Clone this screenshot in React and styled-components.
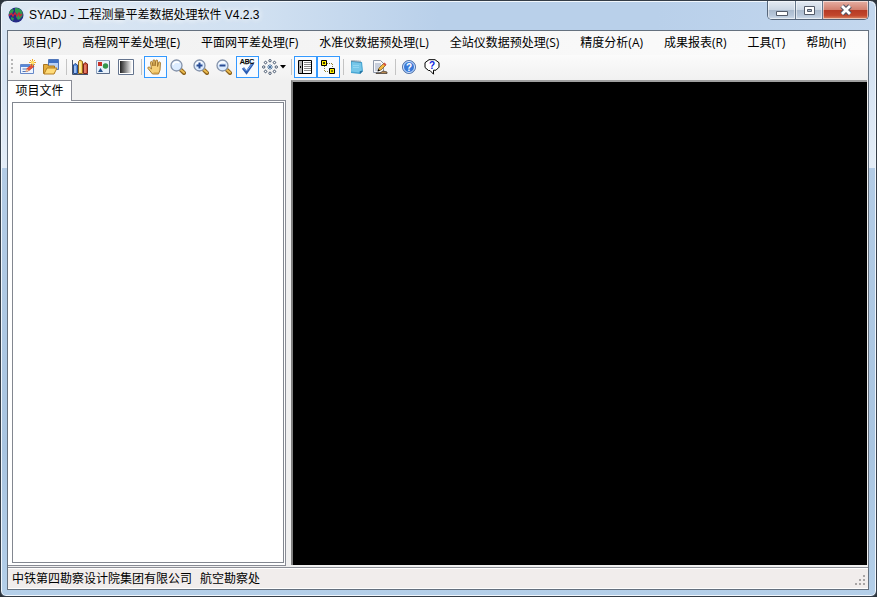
import React from "react";
import styled, { createGlobalStyle, css } from "styled-components";

const Page = createGlobalStyle`
  * { box-sizing: border-box; }
  html, body, #root { height: 100%; }
  body {
    margin: 0;
    overflow: hidden;
    background: #2c333b;
    color: #000;
    font: 12px/16px "Open Sans", "Noto Sans CJK SC", sans-serif;
  }
  button { font: inherit; color: inherit; padding: 0; margin: 0; }
`;

const Window = styled.div`
  height: 100%;
  display: flex;
  flex-direction: column;
  padding: 0 7px 6px 6px;
  border: 1px solid #343d48;
  border-radius: 7px 7px 6px 6px;
  background:
    linear-gradient(90deg, #dde8f4, #d0e0f1 30%, #b9d0ea 50%, #b9d0ea 75%, #c3d7ee) top / 100% 29px no-repeat,
    linear-gradient(180deg, #d5e3f3 0 70px, #e4edf7 167px, #b3cce6 167px, #a9c5e1 450px, #b4cfe9 100%);
  box-shadow: inset 0 0 0 1px #f1f7fd;
`;

const TitleBar = styled.header`
  flex: 0 0 29px;
  display: flex;
  align-items: flex-start;
  padding-left: 1px;
`;

const AppMark = styled.svg`
  flex: none;
  margin: 6px 5px 0 0;
`;

const Title = styled.h1`
  flex: 1;
  margin: 6px 0 0;
  font: 400 12px/16px "Liberation Sans", "Noto Sans CJK SC", sans-serif;
  white-space: nowrap;
  text-shadow: 0 0 6px #fff, 0 0 6px #fff;
`;

const Caption = styled.div`
  display: flex;
  height: 19px;
  border: 1px solid #56667a;
  border-top: 0;
  border-radius: 0 0 5px 5px;
  overflow: hidden;
`;

const CaptionButton = styled.button`
  width: ${(p) => (p.$close ? 46 : 27)}px;
  border: 0;
  border-left: ${(p) => (p.$first ? "0" : "1px solid #66778b")};
  display: flex;
  align-items: center;
  justify-content: center;
  box-shadow: inset 0 0 0 1px #ffffff88;
  background: ${(p) =>
    p.$close
      ? "linear-gradient(#e6b0a4, #d2806f 48%, #b53a24 50%, #c2462c 80%, #dc8a66)"
      : "linear-gradient(#e4ebf3, #ccd7e4 48%, #a9b9cc 50%, #b7c7da 80%, #cfdcea)"};
`;

const Client = styled.main`
  flex: 1;
  min-height: 0;
  display: flex;
  flex-direction: column;
  border: 1px solid #65717f;
  background: #f0f0f0;
`;

const Menu = styled.nav`
  flex: 0 0 24px;
  display: flex;
  align-items: center;
  gap: 21px;
  padding: 0 0 1px 15px;
  background: linear-gradient(90deg, #f0f0f0, #fcfcfc);
`;

const MenuItem = styled.button`
  border: 0;
  background: none;
  white-space: nowrap;
`;

const ToolBar = styled.div`
  flex: 0 0 25px;
  display: flex;
  align-items: center;
  padding-bottom: 1px;
  background: linear-gradient(#fbfbfb, #f1f1f1);
`;

const Grip = styled.span`
  width: 2px;
  height: 16px;
  margin: 0 4px 0 3px;
  background: repeating-linear-gradient(#b8b8b8 0 2px, transparent 2px 4px);
`;

const Divider = styled.span`
  width: 1px;
  height: 16px;
  margin: 0 2px 0 3px;
  background: #c4c4c4;
`;

const Tool = styled.button`
  flex: none;
  display: flex;
  align-items: center;
  justify-content: flex-start;
  gap: 1px;
  width: ${(p) => (p.$wide ? 29 : 23)}px;
  height: 22px;
  padding-left: 2px;
  border: 1px solid transparent;
  background: none;
  ${(p) => p.$on && css`border-color: #3399ff; background: #f8fbff;`}
`;

const Work = styled.div`
  flex: 1;
  min-height: 0;
  display: flex;
  padding-bottom: 1px;
`;

const Side = styled.section`
  flex: 0 0 278px;
  display: flex;
  flex-direction: column;
`;

const Tabs = styled.div`
  display: flex;
  height: 21px;
`;

const Tab = styled.button`
  width: 64px;
  border: 1px solid #898c95;
  border-width: 1px 1px 0 0;
  background: #fff;
  text-align: center;
`;

const TabFill = styled.span`
  flex: 1;
  border-bottom: 1px solid #898c95;
`;

const TabPage = styled.div`
  flex: 1;
  display: flex;
  padding: 1px 1px 2px 4px;
  background: #fff;
  border: 1px solid #898c95;
  border-width: 0 1px 1px 0;
`;

const Tree = styled.div`
  flex: 1;
  border: 1px solid #828790;
`;

const Canvas = styled.section`
  flex: 1;
  margin: 0 1px 1px 5px;
  border: solid #696969;
  border-width: 2px 0 0 2px;
  border-color: #a0a0a0 #696969 #696969 #808080;
  background: #000;
`;

const Status = styled.footer`
  flex: 0 0 22px;
  display: flex;
  align-items: center;
  gap: 8px;
  padding: 0 1px 0 4px;
  border-top: 1px solid #8b8e96;
  box-shadow: inset 0 1px 0 #fff, inset 0 -1px 0 #fff;
  background: #f1edec;
`;

const Sizer = styled.svg`
  margin: 0 0 2px auto;
  align-self: flex-end;
`;

const Icon = ({ children, w = 16 }) => (
  <svg width={w} height="16" viewBox={`0 0 ${w} 16`} aria-hidden="true">{children}</svg>
);

const NewIcon = () => (
  <Icon>
    <path d="M.5 5.500h13v9H.5z" fill="#eef5ff" stroke="#6688c8" />
    <path d="M1 6h9v2H1z" fill="#5888d8" />
    <path d="M2.500 10h5M2.500 12.500h5" stroke="#5276b8" />
    <path d="m6 12.500 1-3 5-4 2 2-5 4z" fill="#e8533a" stroke="#b8321f" strokeWidth=".6" />
    <path d="m5.500 13 1.300-3.200 2 2z" fill="#f6d2a0" />
    <path d="M12.500 0v7M9 3.500h7M10 1l5 5M15 1l-5 5" stroke="#f2a51f" strokeWidth="1" />
    <circle cx="12.500" cy="3.500" r="1.800" fill="#ffe36a" />
  </Icon>
);

const OpenIcon = () => (
  <Icon>
    <path d="M5.500.5h10v10h-10z" fill="#b9d1f5" stroke="#5278ba" />
    <path d="M6 1h9v3H6z" fill="#3f70c5" />
    <path d="M.5 14.500v-9h4l1 1.500h6v7z" fill="#e6ae3b" stroke="#a97520" />
    <path d="m1 15 3-6h10l-3 6z" fill="#ffdb78" stroke="#b57f22" />
  </Icon>
);

const BooksIcon = () => (
  <Icon>
    <path d="M.5 1v14.500H16" fill="none" stroke="#45536b" />
    <path d="m1.500 6 1.500-1.500L5.500 6v8.500h-4z" fill="#5a92e4" stroke="#264b8c" />
    <path d="M6.500 2.500 8 1l2.500 1.500v12h-4z" fill="#f7d35a" stroke="#946519" />
    <path d="m11.500 5 1.500-1.500L15.500 5v9.500h-4z" fill="#d4573c" stroke="#7d241c" />
    <path d="M3 7v7M8 3.500v10" stroke="#fff" strokeOpacity=".8" />
    <path d="M13 6v8" stroke="#f2a08c" />
  </Icon>
);

const ShapesIcon = () => (
  <Icon>
    <path d="M1.500 1.500h13v13h-13z" fill="#e9f2fb" stroke="#91a3bd" />
    <path d="M3 3h4v4H3z" fill="#c83027" />
    <circle cx="10.500" cy="7" r="2.700" fill="#33964c" />
    <path d="m3 13 2.500-4L8 13z" fill="#26518e" />
    <path d="M2 14.500h12.500V2" fill="none" stroke="#5a6c88" />
  </Icon>
);

const GradientIcon = () => (
  <Icon>
    <defs>
      <linearGradient id="shade"><stop stopColor="#222" /><stop offset="1" stopColor="#fff" /></linearGradient>
    </defs>
    <path d="M.5.5h15v15H.5z" fill="#fff" stroke="#64748e" />
    <path d="M2 2h12v12H2z" fill="url(#shade)" />
  </Icon>
);

const HandIcon = () => (
  <Icon>
    <path d="M5.500 15 1 9.500c-.6-1.200.8-2 1.700-1.200L4.500 10 3.500 3.500c0-1.200 1.400-1.300 1.700-.2L6 7V1.800c0-1.300 1.900-1.300 2 0V7l.8-5.200c.2-1.200 1.900-1 1.900.2L10.600 7.500l1-4c.4-1 1.900-.6 1.800.5L13 11l-1.500 4z" fill="#f5cf78" stroke="#9a6c22" strokeWidth=".9" />
    <path d="M6.500 14h5" stroke="#d09a3b" />
  </Icon>
);

const LensIcon = ({ sign }) => (
  <Icon>
    <path d="m11 11 3 3" stroke="#8b611c" strokeWidth="4" strokeLinecap="round" />
    <path d="m11 11 3 2.500" stroke="#edbd50" strokeWidth="2" strokeLinecap="round" />
    <circle cx="6.500" cy="6.500" r="5.500" fill="#dcecff" stroke="#8593aa" strokeWidth="1.300" />
    <path d="M3 6a3.700 3.700 0 0 1 6-2" stroke="#fff" strokeWidth="1.500" fill="none" />
    {sign && <path d="M3.500 6.500h6" stroke="#294c94" strokeWidth="2" />}
    {sign === "plus" && <path d="M6.500 3.500v6" stroke="#294c94" strokeWidth="2" />}
  </Icon>
);

const Letters = styled.text`
  font: 7px "Liberation Sans", sans-serif;
`;

const SpellIcon = () => (
  <Icon w={18}>
    <path d="m4 9 3.500 4.500L14 4" fill="none" stroke="#2b5db4" strokeWidth="2.800" />
    <path d="m4.500 9 3 3L13.500 4.500" fill="none" stroke="#7ba6ea" />
    <Letters x="1" y="5" stroke="#000" strokeWidth=".3">ABC</Letters>
  </Icon>
);

const spokes = [0, 45, 90, 135, 180, 225, 270, 315];

const PointsIcon = () => (
  <Icon>
    {spokes.map((angle) => (
      <g key={angle} transform={`rotate(${angle} 8 8)`}>
        <circle cx="8" cy="1.700" r="1.200" fill="#fff" stroke="#36465f" strokeWidth=".9" />
        <path d="M8 5v3" stroke="#3e6b9d" strokeWidth=".8" />
      </g>
    ))}
  </Icon>
);

const Arrow = () => (
  <svg width="7" height="4" viewBox="0 0 7 4" aria-hidden="true"><path d="M1 0h6L4 3.500z" /></svg>
);

const ListIcon = () => (
  <Icon>
    <path d="M1.500 1.500h13v13h-13z" fill="#fff" stroke="#000" />
    <path d="M2 2h3v12H2z" fill="#b4b4b4" />
    <path d="M5.500 2v12" stroke="#000" />
    <path d="M7 3.500h7M7 5.500h7M7 7.500h7M7 9.500h7M7 11.500h7" stroke="#888" />
    <path d="M3 7h1v2H3z" />
  </Icon>
);

const NodesIcon = () => (
  <Icon>
    <path d="M4.500 7v5.500H8M7 4.500h5.500V8" fill="none" stroke="#8f8332" strokeDasharray="1 1" />
    <path d="M1.500 1.500h5v5h-5zM9.500 9.500h5v5h-5z" fill="#ffed00" stroke="#000" />
    <path d="M3 4h2M4 3v2M11 12h2" stroke="#000" />
  </Icon>
);

const NotebookIcon = () => (
  <Icon>
    <path d="m2 2 11 1 1 9-3 3-9-1z" fill="#48a6d3" />
    <path d="m3 3 9 1 .8 7-2.800 2.500L2 12.500z" fill="#75c6e8" />
    <path d="m14 12-3 3-.3-2.700z" fill="#216f9d" />
    <path d="M3 1v2M5 1v2M7 1.200v2M9 1.400v2M11 1.600v2" stroke="#54687c" strokeWidth=".8" />
    <path d="M4 6.500h6M4 8.500h6" stroke="#98daf4" strokeWidth=".8" />
  </Icon>
);

const EditIcon = () => (
  <Icon>
    <path d="M1.500 1.500h7l3 3v9h-10z" fill="#f7f8fb" stroke="#8e98a9" />
    <path d="M3 5h6M3 7h6M3 9h4M3 11h3" stroke="#8090ae" strokeWidth=".8" />
    <path d="m6 12 1-3 5-5 2 2-5 5z" fill="#f4b941" stroke="#6f511f" strokeWidth=".7" />
    <path d="m11 5 1.500-1.500 2 2L13 7z" fill="#d45444" />
    <path d="m5.500 12.500 1-2.500 1.500 1.500z" />
    <path d="M4 14h4l3-2 4 1v1.500H4z" fill="#b98a52" stroke="#4c4238" strokeWidth=".8" />
  </Icon>
);

const Question = styled.text`
  font: bold ${(p) => p.$size}px "Liberation Sans", sans-serif;
  text-anchor: middle;
`;

const HelpIcon = () => (
  <Icon>
    <circle cx="8" cy="8" r="6.500" fill="#3979d8" stroke="#5876a6" />
    <circle cx="8" cy="8" r="5.500" fill="none" stroke="#d6e7ff" />
    <Question x="8" y="12" $size={10} fill="#fff">?</Question>
  </Icon>
);

const WhatIcon = () => (
  <Icon>
    <path d="M5 .7h6l4 3v4.500l-3 3H9.500v4L6 11.500H4.500L1 8.500V3.700z" fill="#fff" stroke="#000" />
    <Question x="8" y="10" $size={10} fill="#0b24df">?</Question>
  </Icon>
);

const Globe = () => (
  <AppMark width="16" height="16" viewBox="0 0 16 16" aria-hidden="true">
    <circle cx="8" cy="8" r="7.500" fill="#252a86" />
    <path d="M7 1c4-.5 7 2 7.500 4.500V9L12 12l-2 1-2-3 1-3-2-2zM4 2l2 1-2 4H1c.2-2 1-4 3-5zM3 10l3 1-1 3-2-2z" fill="#2f9850" />
    <path d="M1 8.500 3.500 6.500 5 9l2-3 2 3 2-3 1 3 2-2" fill="none" stroke="#cf2637" strokeWidth="1.300" />
  </AppMark>
);

const menus = [
  "项目(P)", "高程网平差处理(E)", "平面网平差处理(F)", "水准仪数据预处理(L)", "全站仪数据预处理(S)",
  "精度分析(A)", "成果报表(R)", "工具(T)", "帮助(H)",
];

const toolGroups = [
  [{ name: "新建", icon: <NewIcon /> }, { name: "打开", icon: <OpenIcon /> }],
  [{ name: "图库", icon: <BooksIcon /> }, { name: "图形", icon: <ShapesIcon /> }, { name: "背景", icon: <GradientIcon /> }],
  [
    { name: "平移", icon: <HandIcon />, on: true },
    { name: "缩放", icon: <LensIcon /> },
    { name: "放大", icon: <LensIcon sign="plus" /> },
    { name: "缩小", icon: <LensIcon sign="minus" /> },
    { name: "注记", icon: <SpellIcon />, on: true },
    { name: "点样式", icon: <><PointsIcon /><Arrow /></>, wide: true },
  ],
  [{ name: "列表", icon: <ListIcon />, on: true }, { name: "节点", icon: <NodesIcon />, on: true }],
  [{ name: "记事本", icon: <NotebookIcon /> }, { name: "编辑", icon: <EditIcon /> }],
  [{ name: "帮助", icon: <HelpIcon /> }, { name: "关于", icon: <WhatIcon /> }],
];

const gripDots = [[8, 0], [4, 4], [8, 4], [0, 8], [4, 8], [8, 8]];

export default function App() {
  return (
    <>
      <Page />
      <Window>
        <TitleBar>
          <Globe />
          <Title>SYADJ - 工程测量平差数据处理软件 V4.2.3</Title>
          <Caption>
            <CaptionButton $first aria-label="最小化">
              <svg width="13" height="13"><path d="M1.500 7.500h11v4h-11z" fill="#fff" stroke="#535b69" /></svg>
            </CaptionButton>
            <CaptionButton aria-label="最大化">
              <svg width="13" height="13">
                <path d="M1.500 2.500h10v8h-10z" fill="#fff" stroke="#535b69" />
                <path d="M4.500 5.500h4v2h-4z" fill="#a8b7c8" stroke="#535b69" />
              </svg>
            </CaptionButton>
            <CaptionButton $close aria-label="关闭">
              <svg width="14" height="12">
                <path d="m3 2 8 8M11 2l-8 8" stroke="#535463" strokeWidth="5" />
                <path d="m3 2 8 8M11 2l-8 8" stroke="#fff" strokeWidth="2.800" />
              </svg>
            </CaptionButton>
          </Caption>
        </TitleBar>
        <Client>
          <Menu>{menus.map((label) => <MenuItem key={label}>{label}</MenuItem>)}</Menu>
          <ToolBar role="toolbar">
            <Grip />
            {toolGroups.map((group, i) => (
              <React.Fragment key={group[0].name}>
                {i > 0 && <Divider />}
                {group.map((t) => (
                  <Tool key={t.name} $on={t.on} $wide={t.wide} aria-label={t.name} aria-pressed={t.on}>{t.icon}</Tool>
                ))}
              </React.Fragment>
            ))}
          </ToolBar>
          <Work>
            <Side>
              <Tabs role="tablist">
                <Tab role="tab" aria-selected="true">项目文件</Tab>
                <TabFill />
              </Tabs>
              <TabPage role="tabpanel"><Tree /></TabPage>
            </Side>
            <Canvas />
          </Work>
          <Status>
            <span>中铁第四勘察设计院集团有限公司</span>
            <span>航空勘察处</span>
            <Sizer width="12" height="12" aria-hidden="true">
              {gripDots.map(([x, y]) => <rect key={`${x}-${y}`} x={x} y={y} width="2" height="2" fill="#a8a5a5" />)}
            </Sizer>
          </Status>
        </Client>
      </Window>
    </>
  );
}
